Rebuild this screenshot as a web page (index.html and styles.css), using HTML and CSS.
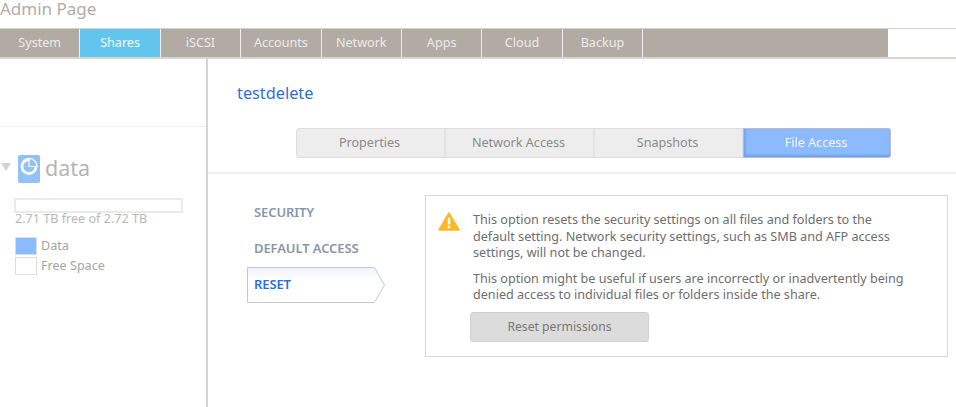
FILE: index.html
```html
<!DOCTYPE html>
<html lang="en">
<head>
<meta charset="utf-8">
<title>Admin Page</title>
<link rel="stylesheet" href="styles.css">
</head>
<body>
<header class="title">Admin Page</header>
<nav class="topnav">
  <a class="topitem">System</a>
  <a class="topitem active">Shares</a>
  <a class="topitem">iSCSI</a>
  <a class="topitem">Accounts</a>
  <a class="topitem">Network</a>
  <a class="topitem">Apps</a>
  <a class="topitem">Cloud</a>
  <a class="topitem">Backup</a>
  <div class="navfill"></div>
  <div class="navsearch"></div>
</nav>
<div class="page">
  <aside class="sidebar">
    <div class="sidetop"></div>
    <div class="volume">
      <span class="caret"></span>
      <svg class="volicon" width="22" height="28" viewBox="0 0 22 28">
        <rect x="0" y="0" width="22" height="28" rx="2" fill="#92c1f7"/>
        <circle cx="11" cy="11.500" r="7" fill="none" stroke="#fff" stroke-width="2.800"/>
        <path d="M11 11.500V3.500A8 8 0 0 1 19 11.500Z" fill="#92c1f7" stroke="#fff" stroke-width="1.200"/>
      </svg>
      <span class="volname">data</span>
    </div>
    <div class="usagebar"></div>
    <div class="usagetext">2.71 TB free of 2.72 TB</div>
    <div class="legend"><span class="swatch swatch-data"></span><span class="legendtext">Data</span></div>
    <div class="legend"><span class="swatch"></span><span class="legendtext">Free Space</span></div>
  </aside>
  <main class="content">
    <h1 class="sharename">testdelete</h1>
    <div class="tabs">
      <a class="tab">Properties</a>
      <a class="tab">Network Access</a>
      <a class="tab">Snapshots</a>
      <a class="tab selected">File Access</a>
    </div>
    <div class="panel">
      <ul class="sidemenu">
        <li class="menuitem">SECURITY</li>
        <li class="menuitem">DEFAULT ACCESS</li>
        <li class="menuitem current">RESET
          <svg class="arrow" width="139" height="36" viewBox="0 0 139 36">
            <defs><linearGradient id="g" x1="0" y1="0" x2="0" y2="1"><stop offset="0" stop-color="#eef2fb"/><stop offset=".35" stop-color="#fff"/></linearGradient></defs>
            <path d="M.5.5H127.500L137.500 18 127.500 35.500H.5Z" fill="url(#g)" stroke="#c4c8cf"/>
          </svg>
        </li>
      </ul>
      <section class="notice">
        <div class="noticebody">
          <svg class="warn" width="22" height="19" viewBox="0 0 22 19">
            <path d="M11 1 21 18H1Z" fill="#fbb829" stroke="#fbb829" stroke-width="1.500" stroke-linejoin="round"/>
            <rect x="9.800" y="5.500" width="2.400" height="7" rx="1" fill="#fff"/>
            <circle cx="11" cy="15" r="1.400" fill="#fff"/>
          </svg>
          <div class="noticetext">
            <p>This option resets the security settings on all files and folders to the default setting. Network security settings, such as SMB and AFP access settings, will not be changed.</p>
            <p>This option might be useful if users are incorrectly or inadvertently being denied access to individual files or folders inside the share.</p>
          </div>
        </div>
        <button class="resetbtn">Reset permissions</button>
      </section>
    </div>
  </main>
</div>
</body>
</html>
```
FILE: styles.css
```css
* { box-sizing: border-box; }
html, body { margin: 0; padding: 0; }
body {
  width: 956px;
  height: 407px;
  overflow: hidden;
  background: #fff;
  font-family: "Noto Sans", "Open Sans", sans-serif;
  color: #777;
}
.title {
  height: 28px;
  font-size: 17px;
  line-height: 18px;
  color: #b2aca5;
}
.topnav {
  display: flex;
  height: 31px;
  border-top: 1px solid #d4d1cd;
  border-bottom: 2px solid #d8d6d3;
  background: #b1aba4;
}
.topitem {
  width: 80.400px;
  flex: none;
  border-right: 1px solid #f0eeec;
  text-align: center;
  font-size: 12.600px;
  line-height: 28px;
  color: #eeece9;
}
.topitem.active { background: #62c5ee; color: #f2fbff; }
.navfill { flex: 1; }
.navsearch { width: 68px; background: #fff; }
.page { display: flex; height: 349px; }
.sidebar {
  width: 208px;
  flex: none;
  border-right: 2px solid #d5d5d5;
}
.sidetop { height: 68px; border-bottom: 1px solid #eee; }
.volume {
  display: flex;
  align-items: center;
  height: 28px;
  margin-top: 28px;
  padding-left: 1px;
}
.caret {
  width: 0;
  height: 0;
  border-left: 5.500px solid transparent;
  border-right: 5.500px solid transparent;
  border-top: 8px solid #d3d3d3;
  margin-right: 7px;
  margin-bottom: 5px;
}
.volname {
  margin-left: 5px;
  margin-bottom: 2px;
  font-size: 21.500px;
  line-height: 28px;
  color: #b5b5b5;
}
.usagebar {
  width: 169px;
  height: 15px;
  margin: 15px 0 0 14px;
  border: 2px solid #eaeaea;
}
.usagetext {
  margin: -1px 0 0 15px;
  font-size: 12.600px;
  line-height: 14px;
  color: #b8b8b8;
}
.legend {
  display: flex;
  align-items: center;
  height: 20px;
  margin-left: 15px;
  font-size: 12.600px;
  color: #a4a4a4;
}
.legendtext { margin-bottom: 2px; }
.usagetext + .legend { margin-top: 10px; }
.swatch {
  width: 22px;
  height: 18px;
  margin-right: 4px;
  border: 1px solid #ddd;
  background: #fff;
}
.swatch-data { background: #8cbcff; }
.content { flex: 1; min-width: 0; }
.sharename {
  margin: 25px 0 0 29px;
  font-size: 16.300px;
  line-height: 18px;
  font-weight: 400;
  color: #2e6fd3;
}
.tabs {
  display: flex;
  width: 595px;
  height: 30px;
  margin: 26px 0 0 88px;
  border: 1px solid #ddd;
  border-radius: 3px;
  background: #ededed;
}
.tab {
  width: 149px;
  flex: none;
  padding-right: 2px;
  border-right: 2px solid #e2e2e2;
  text-align: center;
  font-size: 12.600px;
  line-height: 27px;
  color: #8b8b8b;
}
.tab.selected {
  flex: 1;
  margin: -1px;
  height: 30px;
  border: 1px solid #b9bcc2;
  border-radius: 0 3px 3px 0;
  background: #8cbaff;
  box-shadow: inset 0 -2px 2px #6f9ff5, inset 2px 0 2px #77a6f7;
  color: #f3f7ff;
  line-height: 27px;
}
.panel {
  display: flex;
  align-items: flex-start;
  height: 190px;
  margin-top: 14px;
  border-top: 2px solid #f0f0f0;
}
.sidemenu {
  width: 178px;
  flex: none;
  margin: 21px 0 0 39px;
  padding: 0;
  list-style: none;
}
.menuitem {
  position: relative;
  height: 36px;
  padding-left: 7px;
  font-size: 13px;
  font-weight: 600;
  line-height: 34px;
  letter-spacing: -.1px;
  color: #8796ad;
}
.menuitem.current { color: #2c6fdc; }
.arrow { position: absolute; left: 0; top: 0; z-index: -1; }
.notice {
  width: 523px;
  height: 162px;
  margin-top: 21px;
  padding: 16px 0 0 12px;
  border: 1px solid #d6d6d6;
}
.noticebody { display: flex; }
.warn { flex: none; }
.noticetext {
  width: 436px;
  margin-left: 13px;
  font-size: 12.600px;
  line-height: 16.500px;
  color: #6e6e6e;
}
.noticetext p { margin: 0 0 9px; }
.resetbtn {
  display: block;
  width: 179px;
  height: 30px;
  margin: -1px 0 0 32px;
  border: 1px solid #cfcfcf;
  border-radius: 3px;
  background: #dcdcdc;
  font-family: inherit;
  font-size: 12.200px;
  color: #777;
}
```
